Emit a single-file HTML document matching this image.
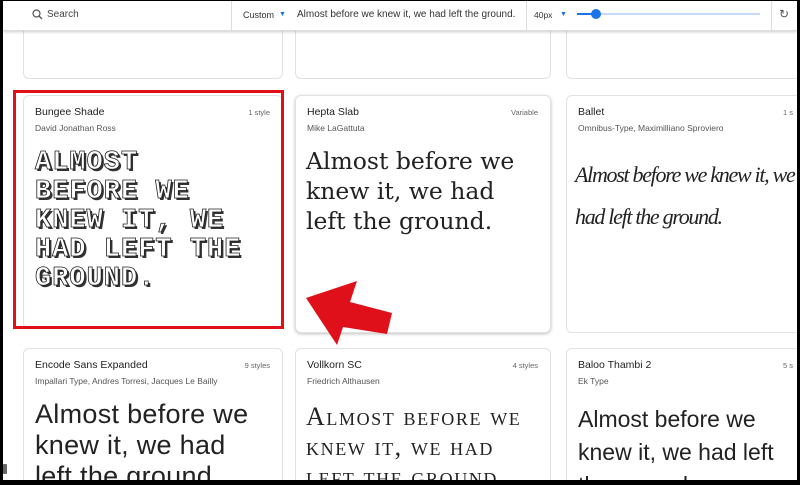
<!DOCTYPE html>
<html><head><style>
*{margin:0;padding:0;box-sizing:border-box}
body{width:800px;height:485px;overflow:hidden;background:#000;font-family:"Liberation Sans",sans-serif;position:relative}
#pg{position:absolute;left:3px;top:1px;width:794px;height:479px;background:#fff;overflow:hidden}
.bar{position:absolute;left:0;top:0;width:794px;height:30px;background:#fff;border-bottom:1px solid #ddd;box-shadow:0 1px 3px rgba(0,0,0,.2);z-index:5;font-size:10px;color:#333}
.bar .t{position:absolute;top:8px;white-space:nowrap}
.card{position:absolute;border:1px solid #e2e2e2;border-radius:6px;background:#fff;overflow:hidden}
.nm{position:absolute;left:11px;top:10px;font-size:10.5px;color:#222}
.au{position:absolute;left:11px;top:27px;font-size:8.5px;color:#555}
.st{position:absolute;right:12px;top:12px;font-size:7.5px;color:#666}
.tx{position:absolute;left:11px;top:50px;color:#222}
</style></head><body><div id="pg">
<div class="bar">
<svg style="position:absolute;left:29px;top:8px" width="11" height="11" viewBox="0 0 11 11"><circle cx="4.5" cy="4.5" r="3.5" fill="none" stroke="#555" stroke-width="1.2"/><path d="M7 7L10 10" stroke="#555" stroke-width="1.3"/></svg>
<div class="t" style="left:44px;color:#444">Search</div>
<div style="position:absolute;left:228px;top:0;width:1px;height:30px;background:#ddd"></div>
<div class="t" style="left:240px;font-size:9px;top:9px">Custom</div>
<div class="t" style="left:276px;font-size:7px;top:10px;color:#1a73e8">▼</div>
<div class="t" style="left:294px">Almost before we knew it, we had left the ground.</div>
<div style="position:absolute;left:523px;top:0;width:1px;height:30px;background:#ddd"></div>
<div class="t" style="left:531px;font-size:8.5px;top:9px">40px</div>
<div class="t" style="left:557px;font-size:7px;top:10px;color:#1a73e8">▼</div>
<div style="position:absolute;left:574px;top:12px;width:183px;height:2px;background:#c6dafc"></div>
<div style="position:absolute;left:574px;top:12px;width:20px;height:2px;background:#1a73e8"></div>
<div style="position:absolute;left:588px;top:8px;width:10px;height:10px;border-radius:50%;background:#1a73e8"></div>
<div style="position:absolute;left:768px;top:0;width:1px;height:30px;background:#ddd"></div>
<div class="t" style="left:776px;font-size:12px;top:6px;color:#555">↻</div>
</div>
<div class="card" style="left:20px;top:-10px;width:260px;height:88px"></div>
<div class="card" style="left:292px;top:-10px;width:256px;height:88px"></div>
<div class="card" style="left:563px;top:-10px;width:240px;height:88px"></div>

<div class="card" style="left:20px;top:94px;width:260px;height:234px">
<div class="nm">Bungee Shade</div><div class="au">David Jonathan Ross</div><div class="st">1 style</div>
<div class="tx" style="top:53px;font-family:'Liberation Mono',monospace;font-weight:bold;font-size:27px;line-height:29px;letter-spacing:1px;color:#fff;-webkit-text-stroke:0.8px #222;text-shadow:2px 2px 0 #333;white-space:nowrap">ALMOST<br>BEFORE WE<br>KNEW IT, WE<br>HAD LEFT THE<br>GROUND.</div></div>

<div class="card" style="left:292px;top:94px;width:256px;height:238px;box-shadow:0 1px 3px rgba(0,0,0,.25)">
<div class="nm">Hepta Slab</div><div class="au">Mike LaGattuta</div><div class="st">Variable</div>
<div class="tx" style="top:50px;left:10px;font-family:'DejaVu Serif',serif;font-size:23.5px;line-height:30px">Almost before we<br>knew it, we had<br>left the ground.</div></div>

<div class="card" style="left:563px;top:94px;width:240px;height:238px">
<div class="nm">Ballet</div><div class="au">Omnibus-Type, Maximilliano Sproviero</div><div class="st">1 s</div>
<div class="tx" style="top:58px;left:8px;font-family:'Liberation Serif',serif;font-style:italic;font-size:22px;line-height:42px;letter-spacing:-1.3px;white-space:nowrap">Almost before we knew it, we<br>had left the ground.</div></div>

<div class="card" style="left:20px;top:347px;width:260px;height:150px">
<div class="nm">Encode Sans Expanded</div><div class="au">Impallari Type, Andres Torresi, Jacques Le Bailly</div><div class="st">9 styles</div>
<div class="tx" style="top:50px;font-size:27px;line-height:31px;white-space:nowrap;letter-spacing:.3px">Almost before we<br>knew it, we had<br>left the ground.</div></div>

<div class="card" style="left:292px;top:347px;width:256px;height:150px">
<div class="nm">Vollkorn SC</div><div class="au">Friedrich Althausen</div><div class="st">4 styles</div>
<div class="tx" style="top:53px;left:10px;font-family:'Liberation Serif',serif;font-size:26px;line-height:30px;font-variant:small-caps;letter-spacing:1.6px;white-space:nowrap">Almost before we<br>knew it, we had<br>left the ground.</div></div>

<div class="card" style="left:563px;top:347px;width:240px;height:150px">
<div class="nm">Baloo Thambi 2</div><div class="au">Ek Type</div><div class="st">5 s</div>
<div class="tx" style="top:54px;font-size:23px;line-height:33px;white-space:nowrap">Almost before we<br>knew it, we had left<br>the ground.</div></div>

<div style="position:absolute;left:10px;top:89px;width:271px;height:239px;border:3px solid #e01018"></div>
<svg style="position:absolute;left:0;top:0" width="794" height="479"><polygon points="303,297 354,280 347,301 389,312 384,333 340,326 334,344" fill="#e0101a"/></svg>
<div style="position:absolute;left:0;top:463px;width:4px;height:10px;background:#666;border-radius:1px"></div>
</div></body></html>
